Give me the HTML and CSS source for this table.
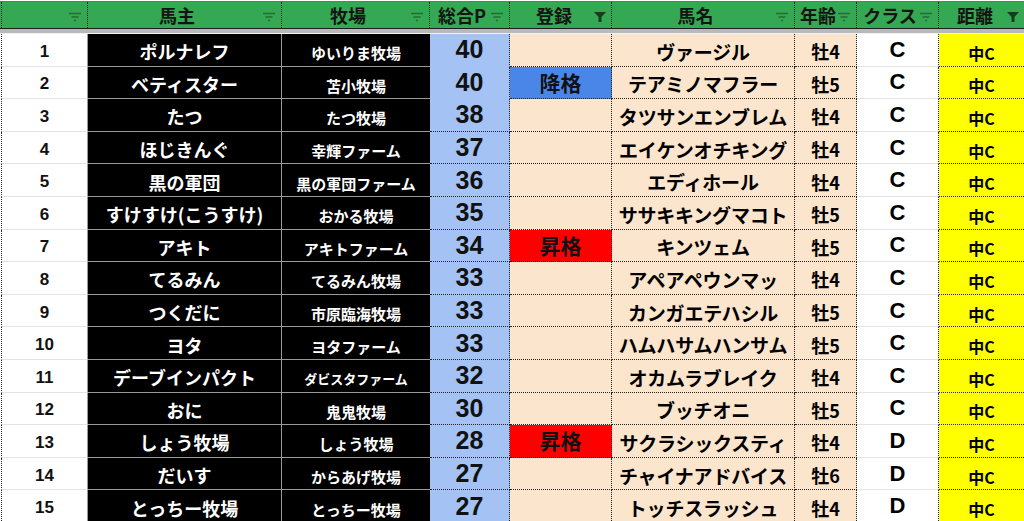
FILE: index.html
```html
<!DOCTYPE html>
<html lang="ja">
<head>
<meta charset="utf-8">
<title>クラス表</title>
<link rel="stylesheet" href="styles.css">
</head>
<body>
<div class="sheet">
  <div class="hdr">
    <div class="h h-num"><span class="ht"></span><svg class="fi" width="14" height="10" viewBox="0 0 14 10"><path d="M1 1.5h12M3.5 5h7M6 8.5h2" stroke="#256a37" stroke-width="1.3" fill="none"/></svg></div>
    <div class="h"><span class="ht">馬主</span><svg class="fi" width="14" height="10" viewBox="0 0 14 10"><path d="M1 1.5h12M3.5 5h7M6 8.5h2" stroke="#256a37" stroke-width="1.3" fill="none"/></svg></div>
    <div class="h"><span class="ht">牧場</span><svg class="fi" width="14" height="10" viewBox="0 0 14 10"><path d="M1 1.5h12M3.5 5h7M6 8.5h2" stroke="#256a37" stroke-width="1.3" fill="none"/></svg></div>
    <div class="h"><span class="ht">総合P</span><svg class="fi" width="14" height="10" viewBox="0 0 14 10"><path d="M1 1.5h12M3.5 5h7M6 8.5h2" stroke="#256a37" stroke-width="1.3" fill="none"/></svg></div>
    <div class="h"><span class="ht">登録</span><svg class="fa" width="12" height="12" viewBox="0 0 12 12"><path d="M0 1h12L7.5 6v5h-3V6z" fill="#173d21"/></svg></div>
    <div class="h"><span class="ht">馬名</span><svg class="fi" width="14" height="10" viewBox="0 0 14 10"><path d="M1 1.5h12M3.5 5h7M6 8.5h2" stroke="#256a37" stroke-width="1.3" fill="none"/></svg></div>
    <div class="h"><span class="ht">年齢</span><svg class="fi" width="14" height="10" viewBox="0 0 14 10"><path d="M1 1.5h12M3.5 5h7M6 8.5h2" stroke="#256a37" stroke-width="1.3" fill="none"/></svg></div>
    <div class="h"><span class="ht">クラス</span><svg class="fi" width="14" height="10" viewBox="0 0 14 10"><path d="M1 1.5h12M3.5 5h7M6 8.5h2" stroke="#256a37" stroke-width="1.3" fill="none"/></svg></div>
    <div class="h h-last"><span class="ht">距離</span><svg class="fa" width="12" height="12" viewBox="0 0 12 12"><path d="M0 1h12L7.5 6v5h-3V6z" fill="#173d21"/></svg></div>
  </div>
  <div class="band"></div>
  <div class="rows">
    <div class="row"><div class="c num">1</div><div class="c own">ポルナレフ</div><div class="c farm">ゆいりま牧場</div><div class="c pts nb">40</div><div class="c reg"></div><div class="c horse">ヴァージル</div><div class="c age">牡4</div><div class="c cls">C</div><div class="c dist">中C</div></div>
    <div class="row"><div class="c num">2</div><div class="c own">ベティスター</div><div class="c farm">苫小牧場</div><div class="c pts nb">40</div><div class="c reg down">降格</div><div class="c horse">テアミノマフラー</div><div class="c age">牡5</div><div class="c cls">C</div><div class="c dist">中C</div></div>
    <div class="row"><div class="c num">3</div><div class="c own">たつ</div><div class="c farm">たつ牧場</div><div class="c pts">38</div><div class="c reg"></div><div class="c horse">タツサンエンブレム</div><div class="c age">牡4</div><div class="c cls">C</div><div class="c dist">中C</div></div>
    <div class="row"><div class="c num">4</div><div class="c own">ほじきんぐ</div><div class="c farm">幸輝ファーム</div><div class="c pts">37</div><div class="c reg"></div><div class="c horse">エイケンオチキング</div><div class="c age">牡4</div><div class="c cls">C</div><div class="c dist">中C</div></div>
    <div class="row"><div class="c num">5</div><div class="c own">黒の軍団</div><div class="c farm">黒の軍団ファーム</div><div class="c pts">36</div><div class="c reg"></div><div class="c horse">エディホール</div><div class="c age">牡4</div><div class="c cls">C</div><div class="c dist">中C</div></div>
    <div class="row"><div class="c num">6</div><div class="c own">すけすけ(こうすけ)</div><div class="c farm">おかる牧場</div><div class="c pts">35</div><div class="c reg"></div><div class="c horse">ササキキングマコト</div><div class="c age">牡5</div><div class="c cls">C</div><div class="c dist">中C</div></div>
    <div class="row"><div class="c num">7</div><div class="c own">アキト</div><div class="c farm">アキトファーム</div><div class="c pts">34</div><div class="c reg up">昇格</div><div class="c horse">キンツェム</div><div class="c age">牡5</div><div class="c cls">C</div><div class="c dist">中C</div></div>
    <div class="row"><div class="c num">8</div><div class="c own">てるみん</div><div class="c farm">てるみん牧場</div><div class="c pts">33</div><div class="c reg"></div><div class="c horse">アペアペウンマッ</div><div class="c age">牡4</div><div class="c cls">C</div><div class="c dist">中C</div></div>
    <div class="row"><div class="c num">9</div><div class="c own">つくだに</div><div class="c farm">市原臨海牧場</div><div class="c pts">33</div><div class="c reg"></div><div class="c horse">カンガエテハシル</div><div class="c age">牡5</div><div class="c cls">C</div><div class="c dist">中C</div></div>
    <div class="row"><div class="c num">10</div><div class="c own">ヨタ</div><div class="c farm">ヨタファーム</div><div class="c pts">33</div><div class="c reg"></div><div class="c horse">ハムハサムハンサム</div><div class="c age">牡5</div><div class="c cls">C</div><div class="c dist">中C</div></div>
    <div class="row"><div class="c num">11</div><div class="c own">デーブインパクト</div><div class="c farm small">ダビスタファーム</div><div class="c pts">32</div><div class="c reg"></div><div class="c horse">オカムラブレイク</div><div class="c age">牡4</div><div class="c cls">C</div><div class="c dist">中C</div></div>
    <div class="row"><div class="c num">12</div><div class="c own">おに</div><div class="c farm">鬼鬼牧場</div><div class="c pts">30</div><div class="c reg"></div><div class="c horse">ブッチオニ</div><div class="c age">牡5</div><div class="c cls">C</div><div class="c dist">中C</div></div>
    <div class="row"><div class="c num">13</div><div class="c own">しょう牧場</div><div class="c farm">しょう牧場</div><div class="c pts">28</div><div class="c reg up">昇格</div><div class="c horse">サクラシックスティ</div><div class="c age">牡4</div><div class="c cls">D</div><div class="c dist">中C</div></div>
    <div class="row"><div class="c num">14</div><div class="c own">だいす</div><div class="c farm">からあげ牧場</div><div class="c pts">27</div><div class="c reg"></div><div class="c horse">チャイナアドバイス</div><div class="c age">牡6</div><div class="c cls">D</div><div class="c dist">中C</div></div>
    <div class="row"><div class="c num">15</div><div class="c own">とっちー牧場</div><div class="c farm">とっちー牧場</div><div class="c pts">27</div><div class="c reg"></div><div class="c horse">トッチスラッシュ</div><div class="c age">牡4</div><div class="c cls">D</div><div class="c dist">中C</div></div>
  </div>
</div>
</body>
</html>
```

FILE: styles.css
```css
* { box-sizing: border-box; }
html, body { margin: 0; padding: 0; background: #fff; overflow: hidden; }
body {
  width: 1024px;
  height: 521px;
  font-family: "Noto Sans CJK JP", "Noto Sans", sans-serif;
  font-weight: 700;
  color: #000;
}
.sheet { width: 1024px; }

.hdr, .row {
  display: grid;
  grid-template-columns: 88px 194px 148px 80px 102px 183px 62px 82px 85px;
}

.hdr {
  height: 28px;
  background: #34a853;
  border-top: 1px solid #2e9a4b;
  border-bottom: 1px solid #1d1d1d;
  margin-top: 1px;
}
.h {
  display: flex;
  align-items: center;
  border-right: 1px dotted #1a1a1a;
  height: 26px;
  color: #141414;
  font-size: 18px;
  line-height: 1;
}
.h-num { border-left: 1px dotted #1a1a1a; margin-left: 1px; }
.h-last { border-right: none; }
.ht { flex: 1; text-align: center; padding-left: 4px; }
.fi { margin: 3px 5px 0 0; flex: none; }
.fa { margin: 4px 5px 0 0; flex: none; }

.band {
  height: 5px;
  background: #b9b9b9;
  border-bottom: 1px solid #f2f2f2;
}

.row { height: 32.6px; }
.c {
  display: flex;
  align-items: center;
  justify-content: center;
  padding-top: 3px;
  white-space: nowrap;
  line-height: 1;
  overflow: hidden;
}

.num {
  background: #fff;
  font-family: "Liberation Sans", Arial, sans-serif;
  font-size: 17px;
  color: #111;
  border-left: 1px dotted #222;
  margin-left: 1px;
  border-bottom: 1px solid #e3e3e3;
  border-right: 1px solid #9a9a9a;
}
.own, .farm {
  background: #000;
  color: #fff;
  border-bottom: 1px solid #9a9a9a;
}
.own { font-size: 18px; border-right: 1px solid #9a9a9a; }
.farm { font-size: 15px; padding-top: 6px; }
.farm.small { font-size: 13px; }

.pts {
  background: #a4c2f4;
  font-family: "Liberation Sans", Arial, sans-serif;
  font-size: 25px;
  color: #111;
  border-right: 1px dotted #222;
  border-bottom: 1px dotted #222;
  padding-top: 0;
}
.pts.nb { border-bottom: 1px solid #a4c2f4; }

.reg, .horse, .age {
  background: #fce5cd;
  border-right: 1px dotted #222;
  border-bottom: 1px dotted #222;
}
.reg { font-size: 21px; padding-top: 0; color: #111; }
.reg.down { background: #4a86e8; }
.reg.up { background: #ff0000; }
.horse { font-size: 19px; letter-spacing: -0.2px; }
.age { font-size: 18px; }

.cls {
  background: #fff;
  font-family: "Liberation Sans", Arial, sans-serif;
  font-size: 22px;
  border-right: 1px dotted #222;
  border-bottom: 1px solid #e3e3e3;
  padding-top: 0;
}
.dist {
  background: #ffff00;
  font-size: 16px;
  border-bottom: 1px dotted #222;
  padding-top: 6px;
}
```
